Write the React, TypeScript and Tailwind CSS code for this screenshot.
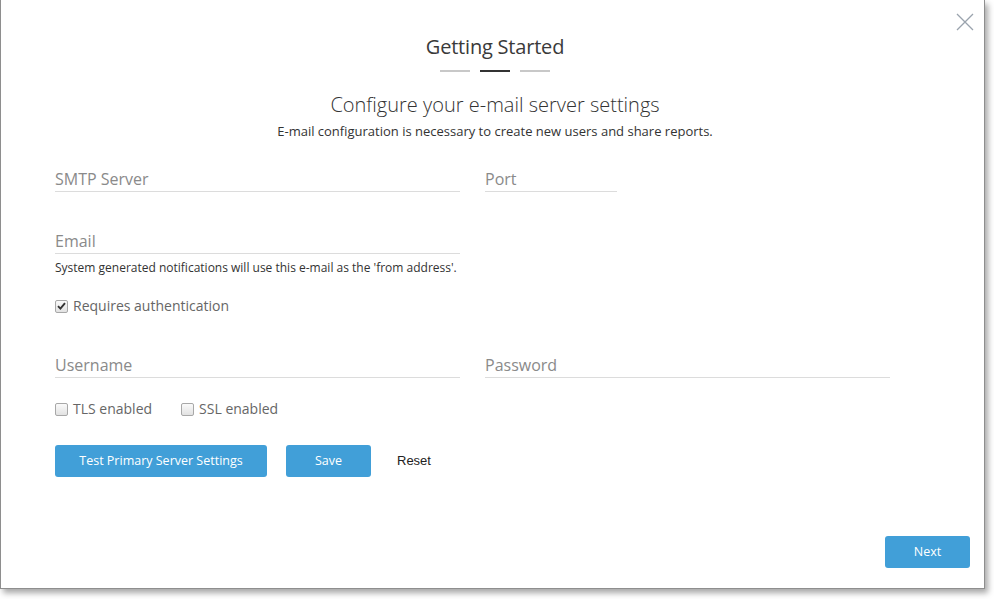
import React from "react";

function Check({ checked }: { checked?: boolean }) {
  return (
    <span className="relative inline-flex h-[13px] w-[13px] items-center justify-center rounded-[2px] border border-[#a8a8a8] bg-gradient-to-b from-[#fafafa] to-[#e2e2e2]">
      {checked && (
        <svg width="9" height="8" viewBox="0 0 9 8">
          <path d="M1 4.2 L3.4 6.6 L8 1.2" stroke="#333" strokeWidth="1.9" fill="none" />
        </svg>
      )}
    </span>
  );
}

function Field({ label, className }: { label: string; className: string }) {
  return (
    <div className={`border-b border-[#dcdcdc] pb-[1px] ${className}`}>
      <div className="text-[16px] leading-[22px] text-[#8a8a8a]">{label}</div>
    </div>
  );
}

export default function App() {
  return (
    <div className="h-[599px] w-[994px] bg-white" style={{ fontFamily: '"Open Sans", "Noto Sans", sans-serif' }}>
      <div className="relative flex h-[589px] w-[985px] flex-col border border-t-0 border-[#8e8e8e] bg-white shadow-[3px_4px_6px_rgba(0,0,0,0.35)]">
        <button className="absolute right-[10px] top-[13px] h-[18px] w-[18px]">
          <svg width="18" height="18" viewBox="0 0 18 18">
            <path d="M1 1 L17 17 M17 1 L1 17" stroke="#9aa3ad" strokeWidth="1.3" fill="none" />
          </svg>
        </button>

        <div className="mt-[33px] flex flex-col items-center pl-[5px]">
          <div className="text-[20px] leading-[28px] font-medium tracking-[-0.2px] text-[#3a3a3a]">Getting Started</div>
          <div className="mt-[9px] flex gap-[10px]">
            <span className="h-[2px] w-[30px] bg-[#c8c8c8]" />
            <span className="h-[2px] w-[30px] bg-[#333]" />
            <span className="h-[2px] w-[30px] bg-[#c8c8c8]" />
          </div>
          <div className="mt-[19px] text-[20px] leading-[28px] font-light text-[#333]">Configure your e-mail server settings</div>
          <div className="mt-[3px] text-[13px] leading-[18px] text-[#333]">E-mail configuration is necessary to create new users and share reports.</div>
        </div>

        <div className="ml-[54px] mt-[28px] flex flex-col">
          <div className="flex gap-[25px]">
            <Field label="SMTP Server" className="w-[405px]" />
            <Field label="Port" className="w-[132px]" />
          </div>
          <Field label="Email" className="mt-[38px] w-[405px]" />
          <div className="mt-[6px] text-[12px] leading-[16px] text-[#333]">System generated notifications will use this e-mail as the 'from address'.</div>
          <label className="mt-[20px] flex items-center gap-[5px] text-[14px] leading-[20px] text-[#666]">
            <Check checked />
            <span>Requires authentication</span>
          </label>
          <div className="mt-[38px] flex gap-[25px]">
            <Field label="Username" className="w-[405px]" />
            <Field label="Password" className="w-[405px]" />
          </div>
          <div className="mt-[21px] flex items-center gap-[29px] text-[14px] leading-[20px] text-[#666]">
            <label className="flex items-center gap-[5px]">
              <Check />
              <span>TLS enabled</span>
            </label>
            <label className="flex items-center gap-[5px]">
              <Check />
              <span>SSL enabled</span>
            </label>
          </div>
          <div className="mt-[26px] flex items-center">
            <button className="h-[32px] w-[212px] rounded-[3px] bg-[#419fd8] text-[12.5px] text-white">Test Primary Server Settings</button>
            <button className="ml-[19px] h-[32px] w-[85px] rounded-[3px] bg-[#419fd8] text-[12.5px] text-white">Save</button>
            <button className="ml-[26px] text-[13px] text-[#222]" style={{ fontFamily: '"Liberation Sans", Arial, sans-serif' }}>Reset</button>
          </div>
        </div>

        <div className="mt-auto mb-[20px] mr-[14px] flex justify-end">
          <button className="h-[32px] w-[85px] rounded-[3px] bg-[#419fd8] text-[12.5px] text-white">Next</button>
        </div>
      </div>
    </div>
  );
}
